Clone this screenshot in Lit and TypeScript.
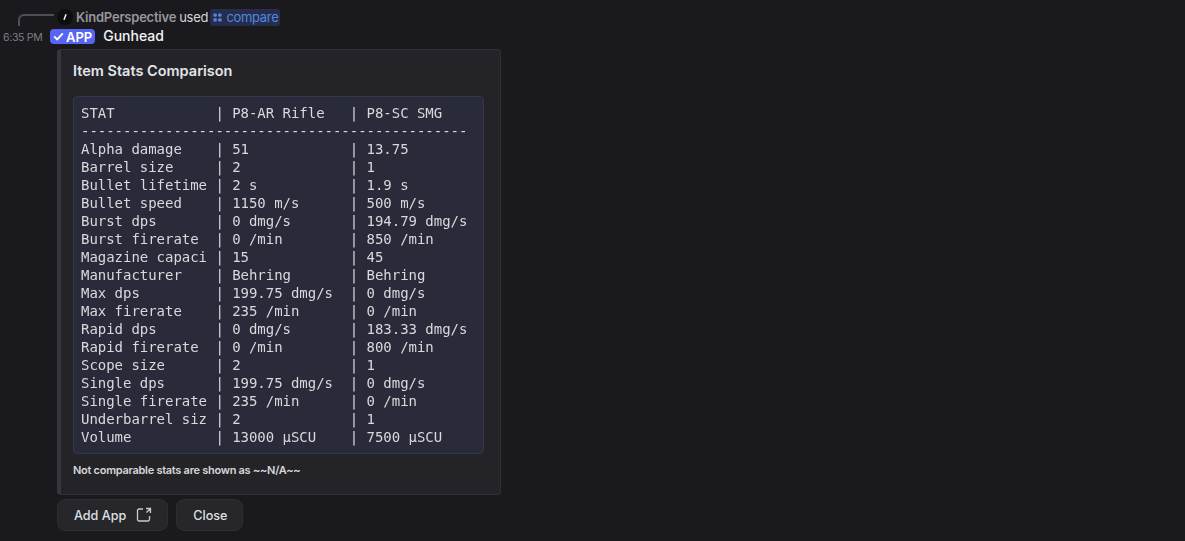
import { LitElement, css, html } from 'lit';
import { customElement } from 'lit/decorators.js';

const TABLE = `STAT            | P8-AR Rifle   | P8-SC SMG
----------------------------------------------
Alpha damage    | 51            | 13.75
Barrel size     | 2             | 1
Bullet lifetime | 2 s           | 1.9 s
Bullet speed    | 1150 m/s      | 500 m/s
Burst dps       | 0 dmg/s       | 194.79 dmg/s
Burst firerate  | 0 /min        | 850 /min
Magazine capaci | 15            | 45
Manufacturer    | Behring       | Behring
Max dps         | 199.75 dmg/s  | 0 dmg/s
Max firerate    | 235 /min      | 0 /min
Rapid dps       | 0 dmg/s       | 183.33 dmg/s
Rapid firerate  | 0 /min        | 800 /min
Scope size      | 2             | 1
Single dps      | 199.75 dmg/s  | 0 dmg/s
Single firerate | 235 /min      | 0 /min
Underbarrel siz | 2             | 1
Volume          | 13000 µSCU    | 7500 µSCU`;

@customElement('app-root')
export class AppRoot extends LitElement {
  static styles = css`
    :host {
      display: block;
      height: 541px;
      overflow: hidden;
      background: #1a1a1e;
      font-family: 'Inter', 'Noto Sans', sans-serif;
      color: #dfe0e2;
    }

    .reply {
      display: flex;
      align-items: center;
      height: 20px;
      padding: 7px 0 0 18px;
    }

    .spine {
      width: 36px;
      height: 12px;
      margin: 6px 3px 0 0;
      border-top: 2px solid #4e5058;
      border-left: 2px solid #4e5058;
      border-top-left-radius: 6px;
      box-sizing: border-box;
    }

    .avatar {
      width: 16px;
      height: 16px;
      margin-bottom: 1px;
      border-radius: 50%;
      background: #0e0e10;
      display: flex;
      align-items: center;
      justify-content: center;
      margin-right: 3px;
    }

    .reply-text {
      display: flex;
      align-items: center;
      font-size: 13px;
      line-height: 16px;
      color: #d5d6d9;
      letter-spacing: -0.22px;
    }

    .name {
      color: #96979c;
      font-weight: 600;
      margin-right: 3px;
    }

    .command {
      display: inline-flex;
      align-items: center;
      gap: 4px;
      height: 17px;
      padding: 0 1px 0 3px;
      margin-left: 2px;
      border-radius: 3px;
      background: #262c4a;
      color: #4f8ae0;
      font-weight: 400;
      letter-spacing: -0.3px;
    }

    .head {
      display: flex;
      align-items: center;
      height: 22px;
      box-sizing: border-box;
      padding: 0 0 4px 3px;
    }

    .time {
      width: 47px;
      margin-top: 3px;
      font-size: 10.5px;
      color: #7d7e84;
      letter-spacing: -0.32px;
    }

    .badge {
      display: flex;
      align-items: center;
      gap: 2px;
      height: 15px;
      padding: 0 3px;
      margin-top: 1px;
      border-radius: 4px;
      background: #5865f2;
      color: #fff;
      font-size: 13px;
      font-weight: 600;
    }

    .author {
      margin: 0 0 2px 8px;
      font-size: 14px;
      font-weight: 500;
      color: #f2f3f5;
    }

    .embed {
      width: 444px;
      box-sizing: border-box;
      margin: 0 0 0 57px;
      padding: 11px 16px 16px 12px;
      background: #242428;
      border: 1px solid #2f3035;
      border-left: 4px solid #36373c;
      border-radius: 4px;
    }

    .title {
      font-size: 14.5px;
      line-height: 20px;
      font-weight: 600;
      color: #e3e4e7;
    }

    pre {
      margin: 15px 0 0;
      padding: 7px;
      background: #2a2b3a;
      border: 1px solid #35374a;
      border-radius: 4px;
      font-family: 'DejaVu Sans Mono', monospace;
      font-size: 14px;
      line-height: 18px;
      letter-spacing: -0.03px;
      color: #d8d9dc;
      will-change: transform;
    }

    .foot {
      margin-top: 8px;
      font-size: 11px;
      line-height: 16px;
      font-weight: 600;
      color: #d5d6d9;
      letter-spacing: -0.28px;
    }

    .actions {
      display: flex;
      gap: 8px;
      margin: 4px 0 0 57px;
    }

    .btn {
      display: flex;
      align-items: center;
      gap: 10px;
      height: 32px;
      box-sizing: border-box;
      padding: 0 15px 0 16px;
      border-radius: 8px;
      background: #26262b;
      border: 1px solid #2d2d32;
      font-size: 12.6px;
      font-weight: 500;
      color: #dfe0e2;
    }
  `;

  render() {
    return html`
      <div class="reply">
        <div class="spine"></div>
        <div class="avatar">
          <svg width="8" height="8" viewBox="0 0 8 8"><path d="M5 1.2 3 6.8" stroke="#fff" stroke-width="1.4" fill="none" /></svg>
        </div>
        <div class="reply-text">
          <span class="name">KindPerspective</span>
          <span>used</span>
          <span class="command">
            <svg width="9" height="9" viewBox="0 0 9 9" fill="#4f8ae0">
              <rect x="0.4" y="0.4" width="3.4" height="3.4" rx="1.2" />
              <rect x="5.2" y="0.4" width="3.4" height="3.4" rx="1.2" />
              <rect x="0.4" y="5.2" width="3.4" height="3.4" rx="1.2" />
              <rect x="5.2" y="5.2" width="3.4" height="3.4" rx="1.2" />
            </svg>
            compare
          </span>
        </div>
      </div>
      <div class="head">
        <span class="time">6:35 PM</span>
        <span class="badge">
          <svg width="11" height="11" viewBox="0 0 11 11"><path d="M1.2 5.5 4.2 8.4 9.8 2.4" stroke="#fff" stroke-width="1.9" fill="none" /></svg>
          APP
        </span>
        <span class="author">Gunhead</span>
      </div>
      <div class="embed">
        <div class="title">Item Stats Comparison</div>
        <pre>${TABLE}</pre>
        <div class="foot">Not comparable stats are shown as ~~N/A~~</div>
      </div>
      <div class="actions">
        <div class="btn">
          Add App
          <svg width="16" height="16" viewBox="0 0 16 16" fill="none" stroke="#c9cace" stroke-width="1.3">
            <path d="M7 2H3a1.5 1.5 0 0 0-1.5 1.5v9A1.5 1.5 0 0 0 3 14h9a1.5 1.5 0 0 0 1.5-1.5V9" />
            <path d="M10 1.5h4.5v4.5M14.5 1.5 10.5 5.5" />
          </svg>
        </div>
        <div class="btn">Close</div>
      </div>
    `;
  }
}
